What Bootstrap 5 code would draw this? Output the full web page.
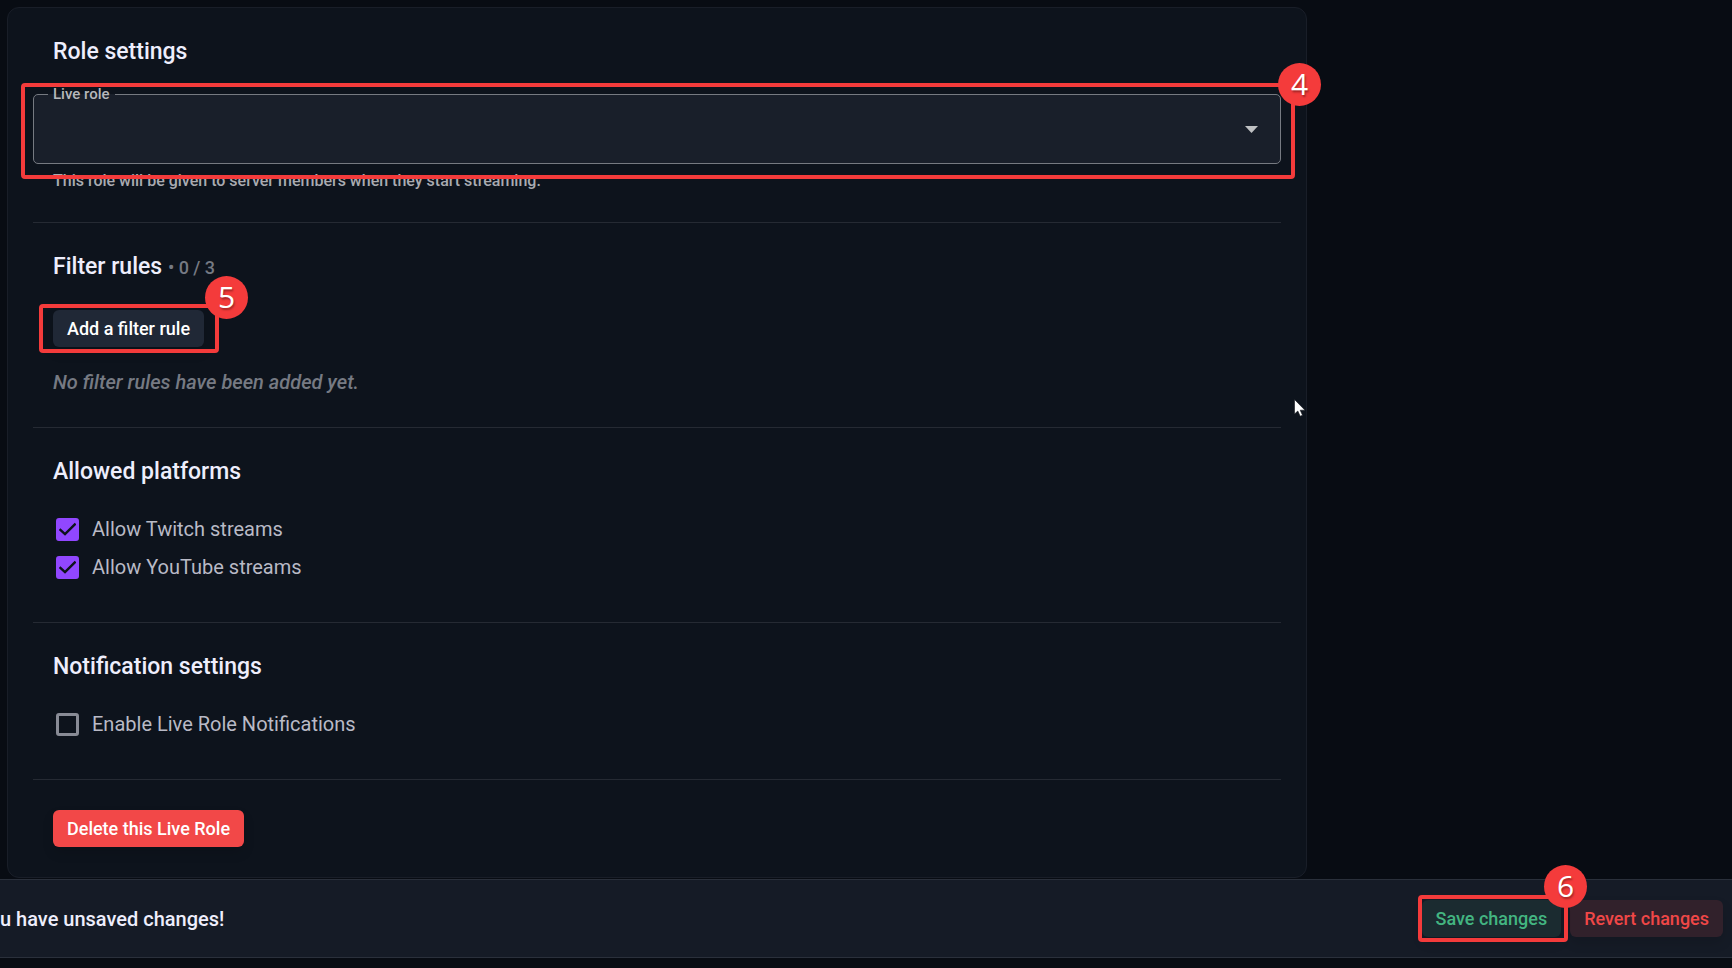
<!DOCTYPE html>
<html lang="en" data-bs-theme="dark">
<head>
<meta charset="utf-8">
<meta name="viewport" content="width=device-width, initial-scale=1">
<title>Live Role settings</title>
<link href="https://cdn.jsdelivr.net/npm/bootstrap@5.3.0/dist/css/bootstrap.min.css" rel="stylesheet">
<style>
  body { background: #080c13; font-family: Roboto, "Liberation Sans", sans-serif; color: #eeeefc; overflow-x: hidden; }
  .settings-card { width: calc(75% + 1px); margin: 7px 0 0 7px; padding: 0 25px; background: #0d131c; border: 1px solid #191e28; border-radius: 12px; }
  .settings-section { padding: 29px 20px 36px; border-bottom: 1px solid #252a33; }
  .settings-section.role-section { padding: 29px 0 31px; }
  .settings-section.filter-section { padding-bottom: 31px; }
  .settings-section.delete-section { padding: 30px 20px; border-bottom: 0; }
  .section-title { font-size: 23px; line-height: 29px; font-weight: 500; margin: 0; color: #eeeefc; }
  .role-section .section-title { padding-left: 20px; }
  .rule-count { font-size: 18px; color: #767a83; }
  .role-wrap { margin-top: 28px; }
  .add-wrap { margin-top: 28px; }
  .check-list { margin-top: 24px; }
  .role-field { height: 70px; background-color: #191f2a; border: 1px solid #767a81; border-radius: 5px; color: #eeeefc; background-image: none; }
  .field-label { left: 15px; top: -10px; padding: 0 5px; font-size: 15px; font-weight: 500; line-height: 20px; color: #b6b8bb; background: linear-gradient(#0d131c 50%, #191f2a 50%); }
  .field-arrow { right: 23px; top: 32px; pointer-events: none; }
  .help-line { font-size: 16px; font-weight: 500; line-height: 20px; color: #a9abb1; margin: 7px 0 0 20px; }
  .app-btn { height: 37px; padding: 0 14px; font-size: 18px; line-height: 35px; font-weight: 500; border: 0; border-radius: 6px; color: #fff; box-shadow: 0 6px 12px rgba(0,0,0,.12); white-space: nowrap; }
  .btn-add, .btn-add:hover { background: #202836; color: #fff; }
  .btn-remove, .btn-remove:hover { background: #f24848; color: #fff; }
  .btn-save, .btn-save:hover { background: #1b2b30; color: #43b581; }
  .btn-revert, .btn-revert:hover { background: #31212b; color: #f04747; }
  .empty-note { font-size: 20px; font-weight: 500; line-height: 28px; color: #767a83; margin: 21px 0 0; }
  .check-row { height: 38px; gap: 13px; padding-left: 3px; }
  .check-row label { font-size: 20px; line-height: 28px; color: #b9bac6; }
  .check-row .form-check-input { width: 23px; height: 23px; margin: 0; border: 3px solid #888b95; border-radius: 3px; background-color: transparent; box-shadow: none; }
  .check-row .form-check-input:checked { background-color: #9147ff; border-color: #9147ff; background-size: 23px; background-image: url("data:image/svg+xml,%3csvg xmlns='http://www.w3.org/2000/svg' viewBox='0 0 23 23'%3e%3cpath fill='none' stroke='%230d131c' stroke-width='2.4' d='M3.6 11.2 9 16.2 19.6 5.6'/%3e%3c/svg%3e"); }
  .callout-frame { border: 4px solid #f43b3b; border-radius: 4px; pointer-events: none; z-index: 2; }
  .frame-role { inset: -11px -14px -15px -12px; }
  .frame-add { inset: -6px -15px -6px -14px; }
  .frame-save { inset: -5px -7px -5px -4px; }
  .callout-number { width: 43px; height: 43px; top: -32px; right: -33px; border-radius: 50%; background: #f43b3b; color: #fff; font: 500 30px/42px "Open Sans", sans-serif; text-align: center; text-shadow: 1px 2px 2px rgba(0,0,0,.35); }
  .frame-role .callout-number { top: -24px; right: -30px; }
  .frame-save .callout-number { top: -34px; right: -23px; }
  .save-bar { margin-top: 1px; height: 79px; padding-right: 9px; gap: 9px; background: #151b26; border: solid #2a303b; border-width: 1px 0; }
  .save-message { font-size: 20px; line-height: 28px; font-weight: 500; color: #eeeefc; }
  .pointer { right: 0; top: 391px; }
</style>
<script src="https://cdn.jsdelivr.net/npm/bootstrap@5.3.0/dist/js/bootstrap.bundle.min.js"></script>
</head>
<body>
<main class="settings-card position-relative">
  <section class="settings-section role-section">
    <h2 class="section-title">Role settings</h2>
    <div class="position-relative role-wrap">
      <select class="form-select role-field" id="liveRole"><option></option></select>
      <label class="field-label position-absolute" for="liveRole">Live role</label>
      <svg class="field-arrow position-absolute" width="13" height="7" viewBox="0 0 13 7" aria-hidden="true"><path d="M0 0h13L6.500 7z" fill="#bfc1c3"/></svg>
      <div class="callout-frame frame-role position-absolute"><span class="callout-number position-absolute">4</span></div>
    </div>
    <p class="help-line">This role will be given to server members when they start streaming.</p>
  </section>

  <section class="settings-section filter-section">
    <h2 class="section-title">Filter rules <span class="rule-count">• 0 / 3</span></h2>
    <div class="position-relative d-inline-block align-top add-wrap">
      <button type="button" class="btn app-btn btn-add d-block">Add a filter rule</button>
      <div class="callout-frame frame-add position-absolute"><span class="callout-number position-absolute">5</span></div>
    </div>
    <p class="empty-note fst-italic">No filter rules have been added yet.</p>
  </section>

  <section class="settings-section">
    <h2 class="section-title">Allowed platforms</h2>
    <div class="check-list">
      <div class="check-row d-flex align-items-center"><input class="form-check-input" type="checkbox" id="twitch" checked><label for="twitch">Allow Twitch streams</label></div>
      <div class="check-row d-flex align-items-center"><input class="form-check-input" type="checkbox" id="youtube" checked><label for="youtube">Allow YouTube streams</label></div>
    </div>
  </section>

  <section class="settings-section">
    <h2 class="section-title">Notification settings</h2>
    <div class="check-list">
      <div class="check-row d-flex align-items-center"><input class="form-check-input" type="checkbox" id="notify"><label for="notify">Enable Live Role Notifications</label></div>
    </div>
  </section>

  <section class="settings-section delete-section">
    <button type="button" class="btn app-btn btn-remove d-block">Delete this Live Role</button>
  </section>

  <svg class="pointer position-absolute" width="12" height="18" viewBox="0 0 12 18" aria-hidden="true"><path d="M.5.5v14.500l3.300-3 2.400 5.200 2.300-1-2.300-5h4.800z" fill="#fff" stroke="#10141b" stroke-width=".6"/></svg>
</main>

<footer class="save-bar d-flex align-items-center">
  <span class="save-message me-auto">u have unsaved changes!</span>
  <div class="position-relative">
    <button type="button" class="btn app-btn btn-save d-block">Save changes</button>
    <div class="callout-frame frame-save position-absolute"><span class="callout-number position-absolute">6</span></div>
  </div>
  <button type="button" class="btn app-btn btn-revert">Revert changes</button>
</footer>
</body>
</html>
